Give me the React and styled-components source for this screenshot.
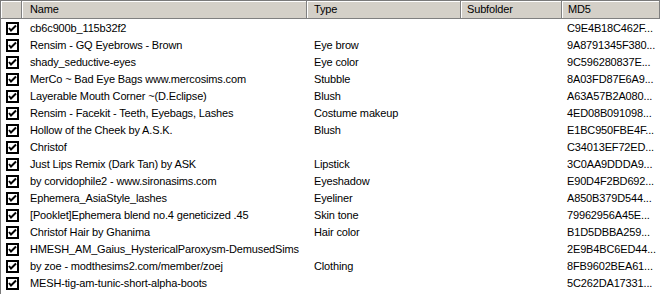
import React from 'react';
import styled, { createGlobalStyle } from 'styled-components';

const GlobalStyle = createGlobalStyle`
  html, body {
    margin: 0;
    padding: 0;
    background: #ffffff;
  }
`;

const COLS = '21px 285px 154px 101px 1fr';

const ListView = styled.div`
  width: 660px;
  height: 294px;
  box-sizing: border-box;
  border-top: 1px solid #7a7a7a;
  border-left: 1px solid #7a7a7a;
  background: #ffffff;
  font-family: Tahoma, "Liberation Sans", Arial, sans-serif;
  font-size: 11px;
  letter-spacing: -0.15px;
  color: #000000;
  overflow: hidden;
`;

const Header = styled.div`
  display: grid;
  grid-template-columns: ${COLS};
  height: 18px;
  background: #d4d0c8;
`;

const HeaderCell = styled.div`
  box-sizing: border-box;
  height: 18px;
  padding-left: ${(p) => p.$pad || 7}px;
  line-height: 17px;
  border-right: 1px solid #808080;
  border-bottom: 1px solid #808080;
  box-shadow: inset 1px 1px 0 #ffffff;
  white-space: nowrap;
  overflow: hidden;
`;

const Body = styled.div`
  padding-top: 1px;
`;

const Row = styled.div`
  display: grid;
  grid-template-columns: ${COLS};
  height: 17px;
  align-items: center;
`;

const Cell = styled.div`
  padding-left: ${(p) => p.$pad || 7}px;
  white-space: nowrap;
  overflow: hidden;
  text-overflow: ${(p) => (p.$clip ? 'clip' : 'ellipsis')};
  line-height: 17px;
`;

const CheckCell = styled.div`
  display: flex;
  align-items: center;
  padding-left: 5px;
  height: 17px;
`;

const Check = () => (
  <svg width="13" height="13" viewBox="0 0 13 13">
    <rect x="0.5" y="0.5" width="12" height="12" fill="#ffffff" stroke="#000" />
    <rect x="1.5" y="1.5" width="10" height="10" fill="none" stroke="#000" />
    <polyline points="3,6 5,8.5 10,3.5" fill="none" stroke="#000" strokeWidth="2" />
  </svg>
);

const items = [
  ['cb6c900b_115b32f2', '', 'C9E4B18C462F...'],
  ['Rensim - GQ Eyebrows - Brown', 'Eye brow', '9A8791345F380...'],
  ['shady_seductive-eyes', 'Eye color', '9C596280837E...'],
  ['MerCo ~ Bad Eye Bags www.mercosims.com', 'Stubble', '8A03FD87E6A9...'],
  ['Layerable Mouth Corner ~(D.Eclipse)', 'Blush', 'A63A57B2A080...'],
  ['Rensim - Facekit - Teeth, Eyebags, Lashes', 'Costume makeup', '4ED08B091098...'],
  ['Hollow of the Cheek by A.S.K.', 'Blush', 'E1BC950FBE4F...'],
  ['Christof', '', 'C34013EF72ED...'],
  ['Just Lips Remix (Dark Tan) by ASK', 'Lipstick', '3C0AA9DDDA9...'],
  ['by corvidophile2 - www.sironasims.com', 'Eyeshadow', 'E90D4F2BD692...'],
  ['Ephemera_AsiaStyle_lashes', 'Eyeliner', 'A850B379D544...'],
  ['[Pooklet]Ephemera blend no.4 geneticized .45', 'Skin tone', '79962956A45E...'],
  ['Christof Hair by Ghanima', 'Hair color', 'B1D5DBBA259...'],
  ['HMESH_AM_Gaius_HystericalParoxysm-DemusedSims', '', '2E9B4BC6ED44...'],
  ['by zoe - modthesims2.com/member/zoej', 'Clothing', '8FB9602BEA61...'],
  ['MESH-tig-am-tunic-short-alpha-boots', '', '5C262DA17331...'],
];

export default function App() {
  return (
    <>
      <GlobalStyle />
      <ListView>
        <Header>
          <HeaderCell />
          <HeaderCell $pad={8}>Name</HeaderCell>
          <HeaderCell>Type</HeaderCell>
          <HeaderCell $pad={6}>Subfolder</HeaderCell>
          <HeaderCell $pad={6}>MD5</HeaderCell>
        </Header>
        <Body>
          {items.map(([name, type, md5], i) => (
            <Row key={i}>
              <CheckCell>
                <Check />
              </CheckCell>
              <Cell $pad={8}>{name}</Cell>
              <Cell>{type}</Cell>
              <Cell />
              <Cell $pad={5} $clip>{md5}</Cell>
            </Row>
          ))}
        </Body>
      </ListView>
    </>
  );
}
